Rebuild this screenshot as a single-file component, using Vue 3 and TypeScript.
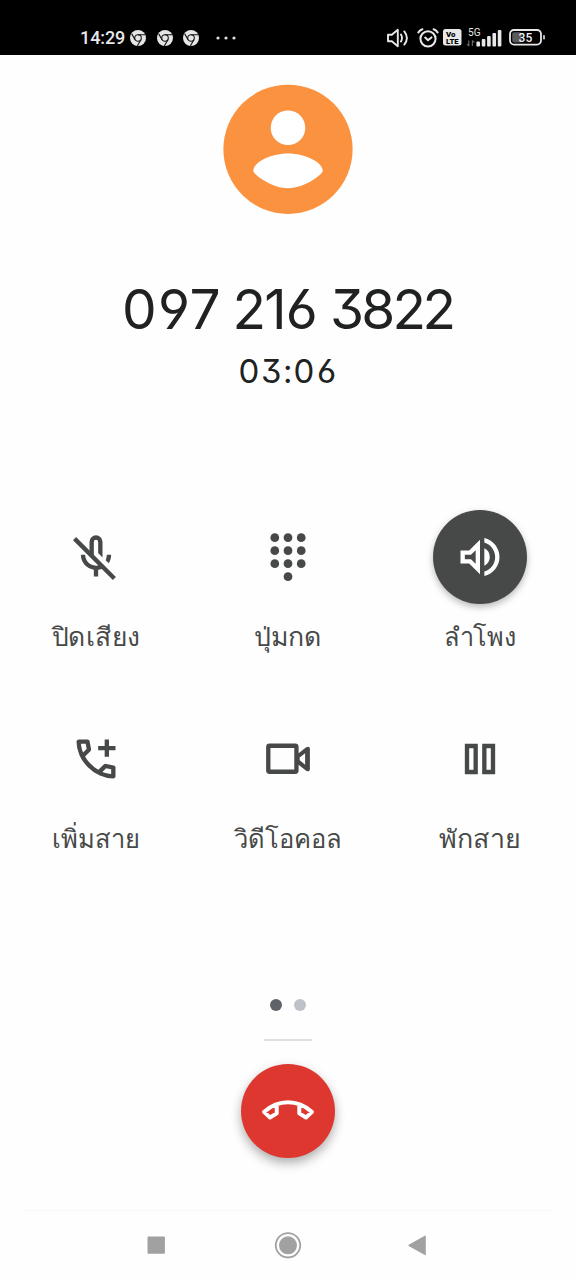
<script setup lang="ts">
interface CallAction {
  id: string
  label: string
  active: boolean
  width: number
}

const time = '14:29'
const phoneNumber = '097 216 3822'
const numberX = '139.3 174 205 228 249.3 275.5 301.8 325 347 378.3 409.2 439.3'
const duration = '03:06'
const durationX = '249 271.2 287.8 304 326.5'
const notifications = [1, 2, 3]
const signalBars = [5, 7.5, 10.5, 13.5, 16.5]

const actions: CallAction[] = [
  { id: 'mute', label: 'ปิดเสียง', active: false, width: 88 },
  { id: 'keypad', label: 'ปุ่มกด', active: false, width: 68 },
  { id: 'speaker', label: 'ลำโพง', active: true, width: 72 },
  { id: 'add', label: 'เพิ่มสาย', active: false, width: 88 },
  { id: 'video', label: 'วิดีโอคอล', active: false, width: 108 },
  { id: 'hold', label: 'พักสาย', active: false, width: 81 },
]

const keys = [
  [5.9, 3.1], [12, 3.1], [18.1, 3.1],
  [5.9, 9.1], [12, 9.1], [18.1, 9.1],
  [5.9, 15.1], [12, 15.1], [18.1, 15.1],
  [12, 21.1],
]
</script>

<template>
  <div class="screen">
    <header class="status">
      <div class="status-left">
        <span class="clock">{{ time }}</span>
        <svg v-for="n in notifications" :key="n" class="chrome" viewBox="0 0 16 16">
          <circle cx="8" cy="8" r="8" fill="#e6e6e6" />
          <circle cx="8" cy="8" r="3.3" fill="none" stroke="#111" stroke-width="1.1" />
          <path d="M8 4.7h7.2M5.1 9.7L1.7 3.9M10.9 9.7L7.4 15.8" stroke="#111" stroke-width="1.1" fill="none" />
        </svg>
        <svg class="more" viewBox="0 0 20 4">
          <circle cx="2" cy="2" r="1.6" /><circle cx="10" cy="2" r="1.6" /><circle cx="18" cy="2" r="1.6" />
        </svg>
      </div>
      <div class="status-right">
        <svg class="vol" viewBox="0 0 22 20" fill="none" stroke="#e8e8e8" stroke-width="1.9" stroke-linejoin="round" stroke-linecap="round">
          <path d="M1 6.8h3.8l6-5v16.4l-6-5H1zM14 6.6q2 3.4 0 6.8M17.3 3.4q5.2 6.6 0 13.2" />
        </svg>
        <svg class="alarm" viewBox="0 0 22 20" fill="none" stroke="#e8e8e8" stroke-width="2" stroke-linecap="round">
          <circle cx="11" cy="10.8" r="7.6" />
          <path d="M1.4 4.4Q3 2 5.4 1.2M20.6 4.4Q19 2 16.6 1.2M8.2 9.6l2.8 2.6 3.4-2.8" />
        </svg>
        <svg class="volte" viewBox="0 0 19 17">
          <rect width="18.5" height="16.5" rx="2.5" fill="#e8e8e8" />
          <text x="3" y="8" textLength="9.5" lengthAdjust="spacingAndGlyphs">Vo</text>
          <text x="3" y="15" textLength="12.5" lengthAdjust="spacingAndGlyphs">LTE</text>
        </svg>
        <svg class="signal" viewBox="0 0 36 20">
          <text x="1" y="8.2" textLength="12.5" lengthAdjust="spacingAndGlyphs">5G</text>
          <path d="M1.8 12.5v5.5M0 16.2l1.8 1.8M5.4 18v-5.5M7.2 14.3l-1.8-1.8" stroke="#666" stroke-width="1.2" fill="none" />
          <rect v-for="(h, i) in signalBars" :key="i" :x="9.4 + i * 5.35" :y="18.6 - h" width="3.6" :height="h" rx="1" fill="#e8e8e8" />
        </svg>
        <svg class="battery" viewBox="0 0 37 17">
          <rect x="1" y="1" width="31" height="14.6" rx="4" fill="none" stroke="#e8e8e8" stroke-width="1.8" />
          <rect x="3.2" y="3.2" width="9.5" height="10.2" rx="1.8" fill="#5a5a5a" />
          <rect x="34.2" y="6" width="1.6" height="4.6" rx=".8" fill="#e8e8e8" />
          <text x="9.6" y="12.6" textLength="13.6" lengthAdjust="spacingAndGlyphs">35</text>
        </svg>
      </div>
    </header>

    <main class="call">
      <svg class="avatar" viewBox="-65 -65 130 130">
        <circle cy=".3" r="64.6" fill="#fb923f" />
        <circle cy="-21.2" r="17.3" fill="#fff" />
        <path d="M0 4.5C17 4.5 34.7 13 34.7 22C34.7 25 17 39.2 0 39.2S-34.7 25 -34.7 22C-34.7 13 -17 4.5 0 4.5z" fill="#fff" />
      </svg>
      <svg class="number" viewBox="0 0 576 66">
        <text :x="numberX" y="54.2">{{ phoneNumber }}</text>
      </svg>
      <svg class="duration" viewBox="0 0 576 40">
        <text :x="durationX" y="31.6">{{ duration }}</text>
      </svg>

      <section class="actions">
        <button v-for="a in actions" :key="a.id" class="action" type="button">
          <span class="disc" :class="{ active: a.active }">
            <svg class="icon" viewBox="0 0 24 24">
              <template v-if="a.id === 'mute'">
                <path d="M9 9.4V5a3 3 0 0 1 6 0v7.2l-2-2V5a1 1 0 0 0-2 0v6.4zM17 11h2c0 1.5-.4 2.8-1.1 3.9l-1.45-1.45c.35-.75.55-1.6.55-2.45z" />
                <path d="M5 11c0 3.53 2.61 6.43 6 6.92V21h2v-3.08c.9-.13 1.75-.44 2.5-.88L14 15.54c-.6.3-1.3.46-2 .46-2.76 0-5-2.24-5-5zM2.81 2.81L1.39 4.22l18.39 18.39 1.41-1.41z" />
              </template>
              <template v-else-if="a.id === 'keypad'">
                <circle v-for="([x, y], i) in keys" :key="i" :cx="x" :cy="y" r="2.02" />
              </template>
              <path v-else-if="a.id === 'speaker'" d="M3 9v6h4l5 5V4L7 9H3zm7-.17v6.34L7.83 13H5v-2h2.83L10 8.83zM16.5 12A4.5 4.5 0 0 0 14 7.97v8.05c1.48-.73 2.5-2.25 2.5-4.02zM14 3.23v2.06c2.89.86 5 3.54 5 6.71s-2.11 5.85-5 6.71v2.06c4.01-.91 7-4.49 7-8.77s-2.99-7.86-7-8.77z" />
              <template v-else-if="a.id === 'add'">
                <path d="M18 3h-2v3h-3v2h3v3h2V8h3V6h-3z" />
                <path d="M19.95 21q-3.125 0-6.175-1.363t-5.55-3.862-3.862-5.55T3 4.05q0-.45.3-.75T4.05 3H8.1q.35 0 .625.238t.325.562l.65 3.5q.05.4-.025.675T9.4 8.45L6.975 10.9q.5.925 1.187 1.787t1.513 1.663q.775.775 1.625 1.438T13.1 17l2.35-2.35q.225-.225.588-.338t.712-.062l3.45.7q.35.1.575.363T21 15.9v4.05q0 .45-.3.75t-.75.3M6.025 9l1.65-1.65L7.25 5H5.025q.125 1.025.35 2.025T6.025 9m8.95 8.95q.975.425 1.988.675T19 18.95v-2.2l-2.35-.475z" />
              </template>
              <path v-else-if="a.id === 'video'" fill-rule="evenodd" d="M3.5 4.9h11.8q1.6 0 1.6 1.6v2.8l3.5-2.7q1.7-.8 1.7.8v9.2q0 1.6-1.7.8l-3.5-2.7v2.6q0 1.6-1.6 1.6H3.5q-1.6 0-1.6-1.6V6.5q0-1.6 1.6-1.6zM3.9 6.9v10h11v-10zM17.4 11.3v1.3l2.5 2v-5.3z" />
              <path v-else fill-rule="evenodd" d="M5 5h6v14H5zm2 2v10h2V7zM13 5h6v14h-6zm2 2v10h2V7z" />
            </svg>
          </span>
          <svg class="label" viewBox="0 0 130 40">
            <text :x="64.8 - a.width / 2" y="27.6" :textLength="a.width" lengthAdjust="spacingAndGlyphs">{{ a.label }}</text>
          </svg>
        </button>
      </section>

      <div class="pager"><i class="dot on"></i><i class="dot"></i></div>
      <div class="handle"></div>
      <button class="hangup" type="button">
        <svg viewBox="-47 -47 94 94" fill="none" stroke="#fff" stroke-width="4" stroke-linejoin="round">
          <path d="M-24 .9L-18 6.5L-11.3 2.4V-6.6V2.4L-18 6.5L-24 .9Q-13 -8.7 0 -8.7T24 .9L18 6.5L11.3 2.4V-6.6V2.4L18 6.5L24 .9" />
        </svg>
      </button>
    </main>

    <nav class="navbar">
      <svg viewBox="0 0 28 28"><rect x="5.5" y="5.4" width="17.4" height="17.4" rx="1" /></svg>
      <svg viewBox="0 0 28 28"><circle cx="14" cy="14.3" r="12.2" fill="none" stroke="#a1a1a1" stroke-width="1.8" /><circle cx="14" cy="14.3" r="9" /></svg>
      <svg viewBox="0 0 28 28"><path d="M19.8 5.3v18.2q0 1.2-1 .6L2.7 15q-1-.6 0-1.2L18.8 4.7q1-.6 1 .6z" /></svg>
    </nav>
  </div>
</template>

<style>
body { background: #fefefe; }
</style>

<style scoped>
.screen {
  width: 576px;
  height: 1280px;
  display: flex;
  flex-direction: column;
  background: #fefefe;
  font-family: Roboto, "Noto Sans Thai", "Noto Sans", sans-serif;
  overflow: hidden;
}
.status {
  height: 55px;
  flex: none;
  box-sizing: border-box;
  padding: 19px 30px 0 80px;
  background: #000;
  display: flex;
  justify-content: space-between;
}
.status-left, .status-right { display: flex; align-items: center; height: 37px; }
.clock { width: 50px; font-size: 18px; letter-spacing: -0.1px; color: #e8e8e8; font-weight: 500; }
.chrome { width: 16px; height: 16px; margin-right: 10.7px; }
.more { width: 20px; height: 4px; margin-left: 6px; fill: #e0e0e0; }
.vol { width: 22px; height: 20px; margin-right: 7.5px; }
.alarm { width: 22px; height: 20px; margin-right: 4.5px; }
.volte { width: 19px; height: 17px; margin-right: 5px; }
.volte text { font: 900 8px Roboto, sans-serif; fill: #000; }
.signal { width: 36px; height: 20px; margin-right: 6px; overflow: visible; }
.signal text { font: 400 10.5px Roboto, sans-serif; fill: #e8e8e8; }
.battery { width: 37px; height: 17px; }
.battery text { font: 500 12px Roboto, sans-serif; fill: #f4f4f4; }
.call { display: flex; flex-direction: column; align-items: center; flex: 1; }
.avatar { width: 130px; height: 130px; margin-top: 29px; flex: none; }
.number, .duration {
  width: 576px;
  flex: none;
  fill: #202121;
  text-anchor: middle;
  font-family: Inter, Lato, sans-serif;
  font-feature-settings: "ss01", "cv03", "cv04";
}
.number { height: 66px; margin-top: 61px; font-size: 55px; }
.duration { height: 40px; margin-top: 10px; font-size: 33px; }
.actions {
  margin-top: 119px;
  width: 576px;
  display: grid;
  grid-template-columns: repeat(3, 192px);
  grid-auto-rows: 202px;
}
.action {
  border: 0;
  padding: 0;
  background: none;
  display: flex;
  flex-direction: column;
  align-items: center;
}
.disc {
  width: 94px;
  height: 94px;
  border-radius: 50%;
  display: flex;
  align-items: center;
  justify-content: center;
  fill: #474948;
}
.disc.active { background: #474948; fill: #fff; box-shadow: 0 3px 7px rgba(0, 0, 0, 0.28); }
.icon { width: 52px; height: 52px; overflow: visible; }
.label { width: 130px; height: 40px; margin-top: 14px; overflow: visible; }
.label text { font-size: 25.5px; fill: #474948; }
.pager { margin-top: 85px; display: flex; gap: 12px; }
.dot { width: 12px; height: 12px; border-radius: 50%; background: #bfc1c8; }
.dot.on { background: #5f6267; }
.handle { width: 48px; height: 2px; margin-top: 28px; background: #e0e0e0; }
.hangup {
  width: 94px;
  height: 94px;
  margin-top: 23px;
  padding: 0;
  border: 0;
  border-radius: 50%;
  background: #dd3730;
  box-shadow: 0 5px 11px rgba(0, 0, 0, 0.32);
}
.hangup svg { display: block; width: 94px; height: 94px; }
.navbar {
  flex: none;
  height: 68px;
  margin: 0 24px;
  border-top: 1px solid #f7f7f7;
  padding: 0 118px 1px;
  display: flex;
  align-items: center;
  justify-content: space-between;
  fill: #a1a1a1;
}
.navbar svg { width: 28px; height: 28px; }
</style>
